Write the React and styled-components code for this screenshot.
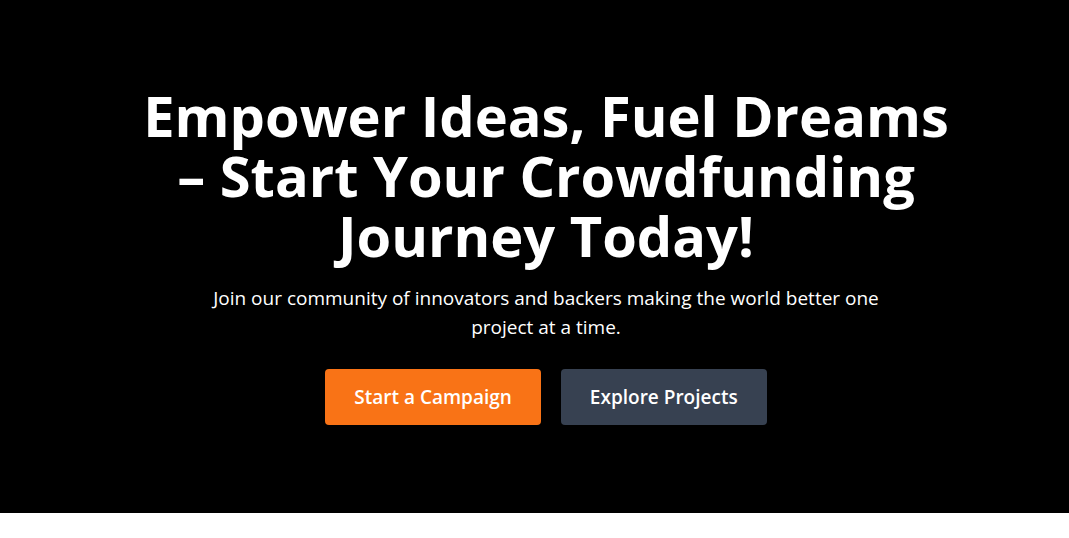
import React from "react";
import styled, { createGlobalStyle } from "styled-components";

const GlobalStyle = createGlobalStyle`
  * {
    box-sizing: border-box;
  }

  body {
    margin: 0;
    background: #ffffff;
    font-family: "Open Sans", "Noto Sans", sans-serif;
  }
`;

function App() {
  return (
    <>
      <GlobalStyle />
      <Hero>
        <Inner>
          <Title>
            Empower Ideas, Fuel Dreams – Start Your Crowdfunding Journey Today!
          </Title>
          <Lead>
            Join our community of innovators and backers making the world
            better one project at a time.
          </Lead>
          <Actions>
            <ActionButton $variant="primary">Start a Campaign</ActionButton>
            <ActionButton $variant="secondary">Explore Projects</ActionButton>
          </Actions>
        </Inner>
      </Hero>
    </>
  );
}

export default App;

// ============================== STYLES ==============================

const Hero = styled.section`
  width: 100%;
  height: 513px;
  background-color: #000000;
  color: #ffffff;
  padding: 85px 0 0 23px;
`;

const Inner = styled.div`
  max-width: 862px;
  margin: 0 auto;
  padding: 0 16px;
  text-align: center;
`;

const Title = styled.h1`
  margin: 0 0 19px;
  font-size: 56px;
  line-height: 60px;
  font-weight: 700;
`;

const Lead = styled.p`
  max-width: 680px;
  margin: 0 auto 27px;
  font-size: 19px;
  line-height: 29px;
`;

const Actions = styled.div`
  display: flex;
  justify-content: center;
  gap: 20px;
`;

const ActionButton = styled.button`
  height: 56px;
  padding: 0 29px;
  border: none;
  border-radius: 4px;
  font-family: inherit;
  font-size: 19px;
  font-weight: 600;
  color: #ffffff;
  background-color: ${(p) => (p.$variant === "primary" ? "#f97316" : "#374151")};
  cursor: pointer;
`;
